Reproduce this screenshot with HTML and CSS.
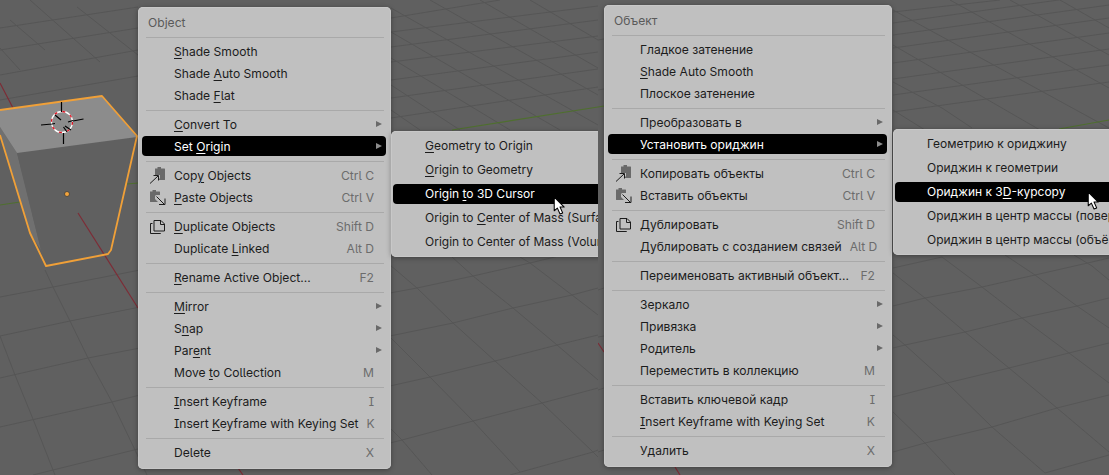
FILE: index.html
```html
<!DOCTYPE html>
<html lang="en">
<head>
<meta charset="utf-8">
<title>Object menu, English and Russian</title>
<link rel="stylesheet" href="styles.css">
</head>
<body>
<svg class="defs" width="0" height="0" aria-hidden="true">
  <symbol id="i-copy" viewBox="0 0 17 17">
    <path class="ic-fill" d="M6 1.5h2.5V0h3.5v1.5h3.5a.5.5 0 0 1 .5.5v10.500a.5.5 0 0 1-.5.5H9L11 11V8H7L6 9z"/>
    <path class="ic-line" d="M1 16.500L9 9M4.500 8.500H9.500V13.500"/>
  </symbol>
  <symbol id="i-paste" viewBox="0 0 17 17">
    <path class="ic-fill" d="M1 2.500h2.500V1H7v1.500h3.500a.5.500 0 0 1 .5.500V6H7L6 7v3l3 3H1.500a.5.5 0 0 1-.5-.5z"/>
    <path class="ic-line" d="M7.500 7.500L15.500 15.500M16 9.500V15.500H10"/>
  </symbol>
  <symbol id="i-dup" viewBox="0 0 17 17">
    <path class="ic-line" d="M5 2.500h7l3.500 3.500v7H5zM11.500 2.500V6.500h4"/>
    <path class="ic-line" d="M3.500 5.500H1.500V15.500H11.500V15"/>
  </symbol>
</svg>

<main class="stage">
  <section class="panel panel-left">
    <svg class="scene" viewBox="0 0 598 475" width="598" height="475" aria-hidden="true">
      <g class="grid">
        <path d="M0 28L138 7M0 50L138 28M0 75L138 50M0 100L138 76M0 128L20 124"/>
        <path d="M30 0L100 62M77 7L138 55M10 20L45 50M0 48L20 70"/>
        <path d="M391 18L500 0M391 32L598 6M391 47L598 20M391 62L598 36M391 80L598 52M391 98L598 69M391 118L598 87"/>
        <path d="M391 8L598 125M430 0L598 95M480 0L598 68M530 0L598 40M391 32L560 130M391 58L510 130M391 85L460 130M391 110L420 130"/>
        <path d="M0 297L53 287L140 270M0 336L70 321L140 307M0 378L88 358L140 348M0 427L112 402L140 395M33 475L53 470L138 449"/>
        <path d="M45 270L53 287L70 321L88 358L112 402L135 450L147 475M0 336L15 375L33 419L53 470L55 475"/>
        <path d="M390 293L417 288L473 276L530 263L563 255M390 336L453 323L513 308L572 295L598 288M390 386L430 377L495 361L557 345L598 335M390 443L402 440L473 421L542 403L598 388M510 475L593 452L598 450"/>
        <path d="M390 265L417 288L453 323L495 361L542 403L593 452L598 457M452 257L473 276L513 308L557 345L598 380M520 257L530 263L572 295L598 315M390 337L430 377L473 421L520 472M390 428L402 440L432 475"/>
      </g>
      <path class="axis-green" d="M452 130L598 107"/>
      <path class="axis-red" d="M0 83L13 108M238 468L243 475"/>
      <path class="face-side" d="M0 127L17 153L41 250L30 233L0 135z"/>
      <path class="face-front" d="M17 153L135 137L111 250L46 266L41 250z"/>
      <path class="face-top" d="M0 110L102 96L137 137L17 153L0 127z"/>
      <path class="axis-green" d="M0 205L20 202M127 184L138 183"/>
      <path class="axis-red" d="M78 213L138 308"/>
      <path class="cube-edge" d="M0 110L102 96L137 136L111 250L108 254L46 266L30 233L0 135"/>
      <circle class="origin" cx="67" cy="194" r="2.500"/>
      <circle class="cursor-white" cx="62" cy="122" r="10.500"/>
      <circle class="cursor-red" cx="62" cy="122" r="10.500"/>
      <path class="cursor-cross" d="M61.500 102V112M63.500 133V144M41 125L52 124M73 121L83.500 119M55 115L61 120M68 122L73 120.500M52 124L55 123.500M63.500 127L67 132M65 126L71 130"/>
    </svg>

    <nav class="menu menu-left">
      <div class="title">Object</div>
      <hr class="sep">
      <div class="row"><span class="slot"></span><span class="label"><u>S</u>hade Smooth</span></div>
      <div class="row"><span class="slot"></span><span class="label">Shade <u>A</u>uto Smooth</span></div>
      <div class="row"><span class="slot"></span><span class="label">Shade <u>F</u>lat</span></div>
      <hr class="sep">
      <div class="row has-sub"><span class="slot"></span><span class="label"><u>C</u>onvert To</span><i class="arrow"></i></div>
      <div class="row has-sub active"><span class="slot"></span><span class="label">Set <u>O</u>rigin</span><i class="arrow"></i></div>
      <hr class="sep">
      <div class="row"><span class="slot"><svg class="icon"><use href="#i-copy"/></svg></span><span class="label">Cop<u>y</u> Objects</span><span class="key">Ctrl C</span></div>
      <div class="row"><span class="slot"><svg class="icon"><use href="#i-paste"/></svg></span><span class="label"><u>P</u>aste Objects</span><span class="key">Ctrl V</span></div>
      <hr class="sep">
      <div class="row"><span class="slot"><svg class="icon"><use href="#i-dup"/></svg></span><span class="label"><u>D</u>uplicate Objects</span><span class="key">Shift D</span></div>
      <div class="row"><span class="slot"></span><span class="label">Duplicate <u>L</u>inked</span><span class="key">Alt D</span></div>
      <hr class="sep">
      <div class="row"><span class="slot"></span><span class="label"><u>R</u>ename Active Object...</span><span class="key">F2</span></div>
      <hr class="sep">
      <div class="row has-sub"><span class="slot"></span><span class="label"><u>M</u>irror</span><i class="arrow"></i></div>
      <div class="row has-sub"><span class="slot"></span><span class="label">S<u>n</u>ap</span><i class="arrow"></i></div>
      <div class="row has-sub"><span class="slot"></span><span class="label">Par<u>e</u>nt</span><i class="arrow"></i></div>
      <div class="row"><span class="slot"></span><span class="label">Move <u>t</u>o Collection</span><span class="key">M</span></div>
      <hr class="sep">
      <div class="row"><span class="slot"></span><span class="label"><u>I</u>nsert Keyframe</span><span class="key">I</span></div>
      <div class="row"><span class="slot"></span><span class="label">Insert <u>K</u>eyframe with Keying Set</span><span class="key">K</span></div>
      <hr class="sep">
      <div class="row"><span class="slot"></span><span class="label">Delete</span><span class="key">X</span></div>
    </nav>

    <nav class="submenu sub-left">
      <div class="subrow"><u>G</u>eometry to Origin</div>
      <div class="subrow"><u>O</u>rigin to Geometry</div>
      <div class="subrow active">Origin <u>t</u>o 3D Cursor</div>
      <div class="subrow">Origin to <u>C</u>enter of Mass (Surface)</div>
      <div class="subrow">Origin to Center of Mass (Volume)</div>
    </nav>

    <svg class="pointer pointer-left" viewBox="0 0 12 18" width="13" height="19" aria-hidden="true"><path d="M1 1V14L4 11.500L6.500 17L9 16L6.500 10.500H10.500z"/></svg>
  </section>

  <section class="panel panel-right">
    <svg class="scene" viewBox="598 0 511 475" width="511" height="475" aria-hidden="true">
      <g class="grid">
        <path d="M893 12L1000 0M893 23L1109 -7M893 35L1109 5M893 48L1109 18M893 63L1109 33M893 79L1109 49M893 95L1109 65M893 112L1109 82"/>
        <path d="M893 10L1109 128M950 0L1109 88M1010 0L1109 55M1060 0L1109 28M893 45L1040 130M893 82L942 108L972 128M893 110L925 130"/>
        <path d="M893 268L942 257M893 306L925 298L982 287L1035 275L1092 262L1109 258M893 348L905 345L965 332L1022 318L1077 306L1109 298M893 397L947 383L1009 368L1069 353L1109 343M893 452L925 443L992 427L1057 408L1109 395M1045 473L1109 455"/>
        <path d="M942 257L982 287L1022 318L1069 353L1109 383M893 273L925 298L965 332L1009 368L1057 408L1109 452M893 335L905 345L947 383L992 427L1045 473M893 412L925 443L955 475M1005 255L1035 275L1077 306L1109 328M1074 255L1092 266L1109 280"/>
        <path d="M598 40L604 39M598 90L604 89M598 290L604 288M598 337L604 336M598 390L604 388M598 452L604 450"/>
      </g>
      <path class="axis-green" d="M1059 129L1109 120M598 107L604 106"/>
      <path class="axis-red" d="M598 343L604 352M675 467L680 475"/>
    </svg>

    <nav class="menu menu-right">
      <div class="title">Объект</div>
      <hr class="sep">
      <div class="row"><span class="slot"></span><span class="label">Гладкое затенение</span></div>
      <div class="row"><span class="slot"></span><span class="label"><u>S</u>hade Auto Smooth</span></div>
      <div class="row"><span class="slot"></span><span class="label">Плоское затенение</span></div>
      <hr class="sep">
      <div class="row has-sub"><span class="slot"></span><span class="label">Преобразовать в</span><i class="arrow"></i></div>
      <div class="row has-sub active"><span class="slot"></span><span class="label">Установить ориджин</span><i class="arrow"></i></div>
      <hr class="sep">
      <div class="row"><span class="slot"><svg class="icon"><use href="#i-copy"/></svg></span><span class="label">Копировать объекты</span><span class="key">Ctrl C</span></div>
      <div class="row"><span class="slot"><svg class="icon"><use href="#i-paste"/></svg></span><span class="label">Вставить объекты</span><span class="key">Ctrl V</span></div>
      <hr class="sep">
      <div class="row"><span class="slot"><svg class="icon"><use href="#i-dup"/></svg></span><span class="label">Дублировать</span><span class="key">Shift D</span></div>
      <div class="row"><span class="slot"></span><span class="label">Дублировать с созданием связей</span><span class="key">Alt D</span></div>
      <hr class="sep">
      <div class="row"><span class="slot"></span><span class="label">Переименовать активный объект...</span><span class="key">F2</span></div>
      <hr class="sep">
      <div class="row has-sub"><span class="slot"></span><span class="label">Зеркало</span><i class="arrow"></i></div>
      <div class="row has-sub"><span class="slot"></span><span class="label">Привязка</span><i class="arrow"></i></div>
      <div class="row has-sub"><span class="slot"></span><span class="label">Родитель</span><i class="arrow"></i></div>
      <div class="row"><span class="slot"></span><span class="label">Переместить в коллекцию</span><span class="key">M</span></div>
      <hr class="sep">
      <div class="row"><span class="slot"></span><span class="label">Вставить ключевой кадр</span><span class="key">I</span></div>
      <div class="row"><span class="slot"></span><span class="label"><u>I</u>nsert Keyframe with Keying Set</span><span class="key">K</span></div>
      <hr class="sep">
      <div class="row"><span class="slot"></span><span class="label">Удалить</span><span class="key">X</span></div>
    </nav>

    <nav class="submenu sub-right">
      <div class="subrow">Геометрию к ориджину</div>
      <div class="subrow">Ориджин к геометрии</div>
      <div class="subrow active">Ориджин к 3<u>D</u>-курсору</div>
      <div class="subrow">Ориджин в центр массы (поверхность)</div>
      <div class="subrow">Ориджин в центр массы (объём)</div>
    </nav>

    <svg class="pointer pointer-right" viewBox="0 0 12 18" width="13" height="19" aria-hidden="true"><path d="M1 1V14L4 11.500L6.500 17L9 16L6.500 10.500H10.500z"/></svg>
  </section>
</main>
</body>
</html>
```

FILE: styles.css
```css
* { box-sizing: border-box; }

html, body {
  margin: 0;
  padding: 0;
  overflow: hidden;
  background: #606060;
}

.defs { position: absolute; }

.stage {
  display: flex;
  width: 1109px;
  height: 475px;
  overflow: hidden;
  font-family: Inter, "Noto Sans", sans-serif;
  font-size: 12.1px;
  font-feature-settings: "cv08", "ss02";
  color: #1c1c1c;
}

.panel {
  position: relative;
  height: 475px;
  overflow: hidden;
  background: #606060;
}
.panel-left { flex: 0 0 598px; }
.panel-right { flex: 0 0 511px; }

.scene {
  position: absolute;
  left: 0;
  top: 0;
  display: block;
}

.grid path { fill: none; stroke: #565656; stroke-width: 1; }
.axis-green { fill: none; stroke: #4f6f2f; stroke-width: 1.2; }
.axis-red { fill: none; stroke: #7d2c36; stroke-width: 1.2; }
.face-top { fill: #8c8c8c; }
.face-front { fill: #606060; }
.face-side { fill: #707070; }
.cube-edge { fill: none; stroke: #f0a038; stroke-width: 1.8; stroke-linejoin: round; }
.origin { fill: #f3a43c; stroke: #3c3c3c; stroke-width: 0.8; }
.cursor-white { fill: none; stroke: #fff; stroke-width: 1.3; }
.cursor-red { fill: none; stroke: #e01020; stroke-width: 1.3; stroke-dasharray: 3 5.250; }
.cursor-cross { fill: none; stroke: #000; stroke-width: 1.2; }

.menu, .submenu {
  position: absolute;
  display: flex;
  flex-direction: column;
  background: #c0c0c0;
  border-radius: 5px;
  box-shadow: 0 1px 5px rgba(0, 0, 0, 0.35), inset 0 0 0 1px #c8c8c8;
}

.menu { padding: 0 0 6px; }
.menu-left { left: 138px; top: 7px; width: 253px; }
.menu-right { left: 6px; top: 5px; width: 288px; }

.title {
  height: 26px;
  padding: 8px 10px 0;
  line-height: 15px;
  color: #5a5a5a;
}

.sep {
  flex: 0 0 1px;
  align-self: stretch;
  height: 1px;
  margin: 4px 7px 2px 8px;
  border: 0;
  background: #a9a9a9;
}

.row {
  display: flex;
  flex: 0 0 20px;
  align-items: center;
  height: 20px;
  margin: 1px 5px 1px 4px;
  padding: 0 12px 0 7px;
  border-radius: 4px;
  white-space: nowrap;
}
.row.has-sub { padding-right: 4px; }

.slot {
  display: flex;
  flex: 0 0 25px;
  align-items: center;
  height: 20px;
}
.icon { display: block; width: 17px; height: 17px; }
.ic-fill { fill: #6a6a6a; }
.ic-line { fill: none; stroke: #1c1c1c; stroke-width: 1; }

.label { flex: 1 1 auto; }
.key { flex: 0 0 auto; margin-left: 8px; color: #6c6c6c; }

.arrow {
  flex: 0 0 auto;
  width: 0;
  height: 0;
  border-left: 6px solid #696969;
  border-top: 3.500px solid transparent;
  border-bottom: 3.500px solid transparent;
}

.active { background: #000; color: #fff; }
.row.active .arrow { border-left-color: #8c8c8c; }

u {
  text-decoration-thickness: 1px;
  text-underline-offset: 2px;
}

.submenu { padding: 3px 0 0; height: 126px; font-size: 12px; }
.sub-left { left: 391px; top: 131px; width: 225px; }
.sub-right { left: 295px; top: 129px; width: 240px; }

.subrow {
  flex: 0 0 20px;
  height: 20px;
  margin: 2px;
  padding: 0 0 0 32px;
  line-height: 19px;
  border-radius: 4px;
  white-space: nowrap;
  overflow: hidden;
}

.pointer { position: absolute; }
.pointer path { fill: #fff; stroke: #000; stroke-width: 1; stroke-linejoin: round; }
.pointer-left { left: 553px; top: 196px; }
.pointer-right { left: 489px; top: 191px; }
```
